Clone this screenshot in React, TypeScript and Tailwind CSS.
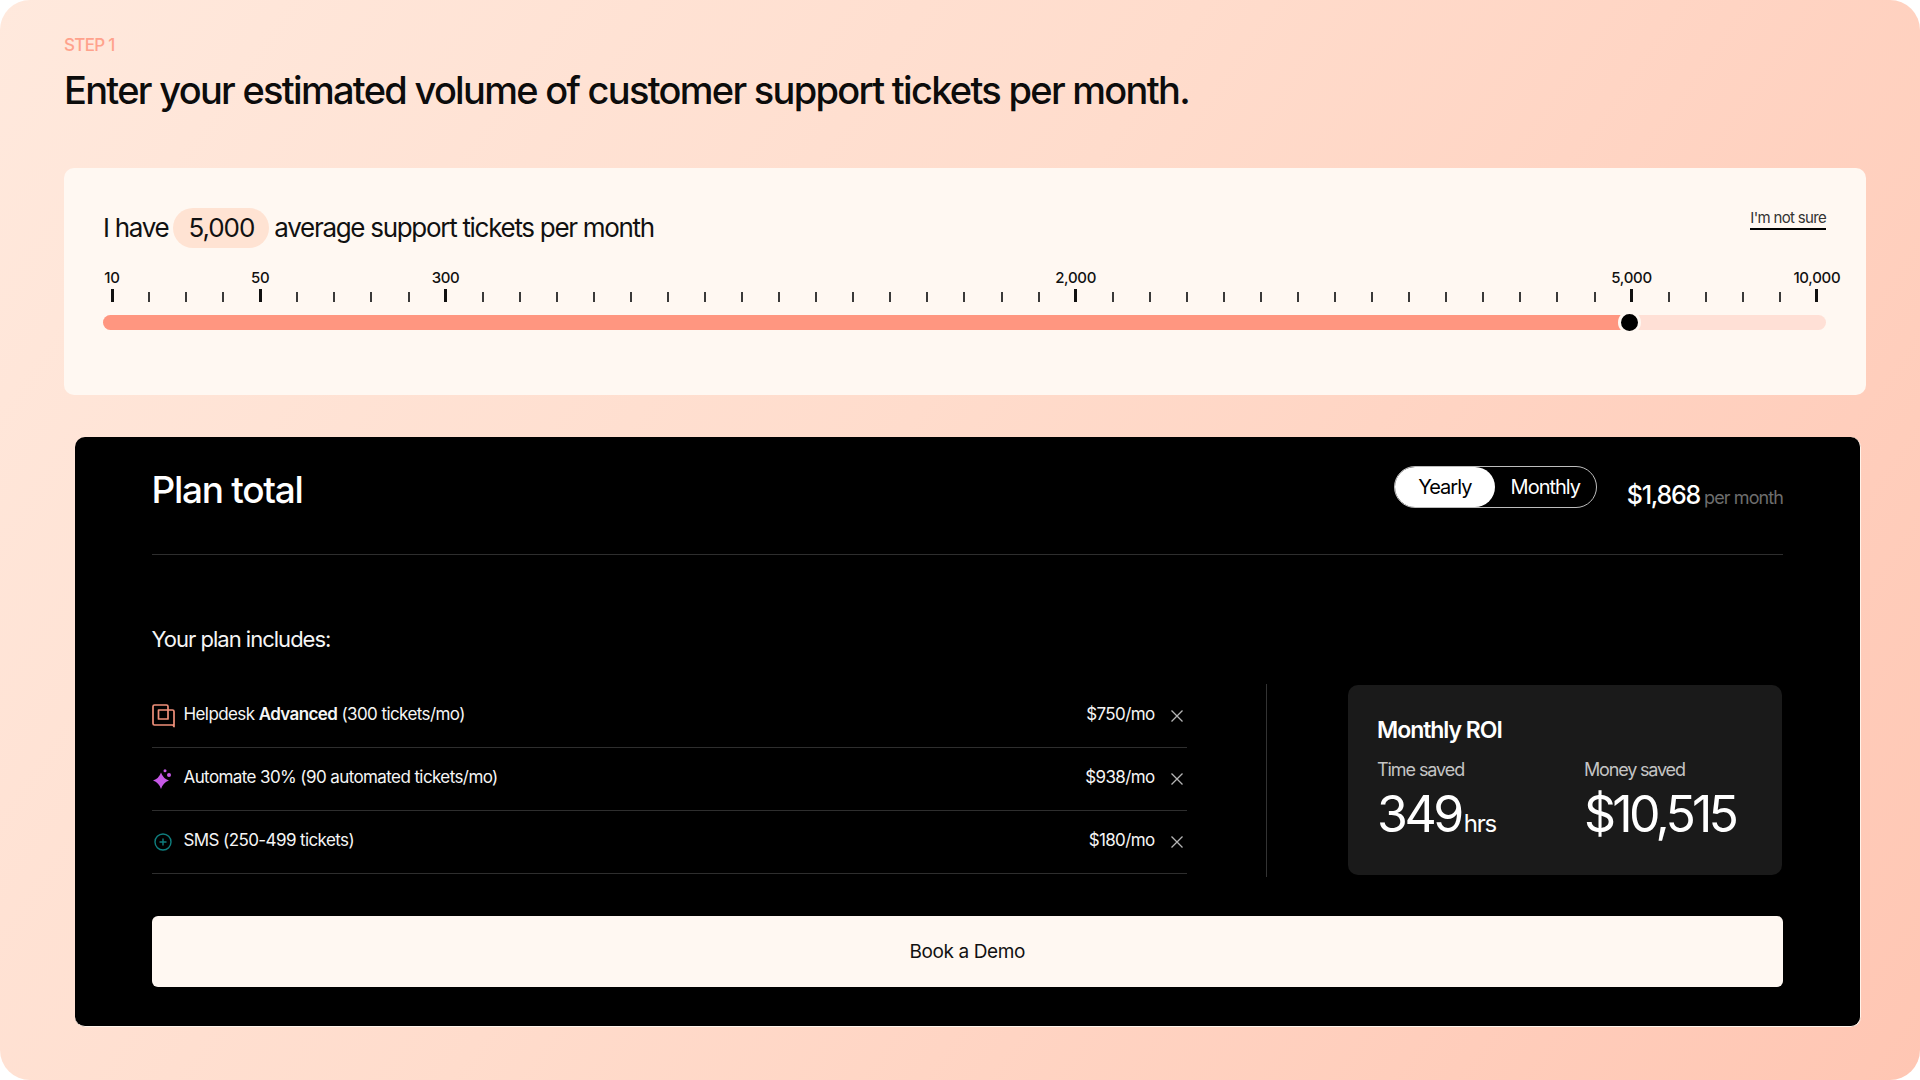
import React from "react";

const ticks = Array.from({ length: 47 }, (_, i) => i);
const labels: Record<number, string> = { 0: "10", 4: "50", 9: "300", 26: "2,000", 41: "5,000", 46: "10,000" };

function HelpdeskIcon() {
  return (
    <svg width="23" height="24" viewBox="0 0 23 24" fill="none" stroke="#f0907a" strokeWidth="1.7" strokeLinejoin="round">
      <path d="M16 15V2.500A1.500 1.500 0 0 0 14.500 1H2.500A1.500 1.500 0 0 0 1 2.500V19.500A1.500 1.500 0 0 0 2.500 21H21L22 22.500V7.500A1.500 1.500 0 0 0 20.500 6H6.500V15H16Z" />
    </svg>
  );
}

function SparkIcon() {
  return (
    <svg width="22" height="22" viewBox="0 0 22 22" fill="#c658e6">
      <path d="M9 3.500Q11 9.500 17 11.500Q11 13.500 9 20Q7 13.500 1 11.500Q7 9.500 9 3.500Z" />
      <circle cx="17" cy="6" r="2" />
      <circle cx="13" cy="1.800" r="1.500" />
    </svg>
  );
}

function PlusIcon() {
  return (
    <svg width="18" height="18" viewBox="0 0 18 18" fill="none" stroke="#0f7f7f" strokeWidth="1.400">
      <circle cx="9" cy="9" r="8" />
      <path d="M9 5.500v7M5.500 9h7" />
    </svg>
  );
}

function CloseIcon() {
  return (
    <svg width="12" height="12" viewBox="0 0 12 12" fill="none" stroke="#b5b5b5" strokeWidth="1.300">
      <path d="M.5.500l11 11M11.500.500l-11 11" />
    </svg>
  );
}

function Row({ icon, text, price }: { icon: React.ReactNode; text: React.ReactNode; price: string }) {
  return (
    <div className="flex h-[63px] items-center border-b border-[#2e2e2e]">
      <div className="flex w-[32px] shrink-0 items-center">{icon}</div>
      <div className="flex-1 pb-[2px] text-[17px] tracking-[-0.035em] text-[#f5f5f5]">{text}</div>
      <div className="pb-[2px] text-[17px] tracking-[-0.037em] text-[#f5f5f5]">{price}</div>
      <div className="ml-[16px] mr-[4px] flex w-[12px] justify-center">
        <CloseIcon />
      </div>
    </div>
  );
}

export default function App() {
  return (
    <div className="h-[1080px] w-[1920px] bg-white font-['Inter',sans-serif]">
      <div className="flex h-[1080px] w-[1920px] flex-col rounded-[30px] bg-[linear-gradient(125deg,#ffe9dd_0%,#ffdccc_45%,#ffc6b3_100%)] pl-[64px] pr-[54px]">
        <div className="mt-[36px] text-[17px] font-medium leading-[18px] tracking-[-0.04em] text-[#ffa28c]">STEP 1</div>
        <h1 className="mt-[13px] text-[38px] font-[450] leading-[46px] tracking-[-0.045em] text-[#0c0c0c]">
          Enter your estimated volume of customer support tickets per month.
        </h1>

        <div className="mt-[55px] h-[227px] rounded-[10px] bg-[#fff8f2] pl-[39px] pr-[40px] pt-[40px]">
          <div className="flex items-start justify-between">
            <div className="flex h-[40px] items-center text-[26px] tracking-[-0.05em] text-[#111111]">
              <span className="pb-[2px]">I have</span>
              <span className="mx-[5px] flex h-[40px] w-[96px] items-center justify-center rounded-full bg-[#ffe3d3] pb-[2px] tracking-[-0.04em]">5,000</span>
              <span className="pb-[2px]">average support tickets per month</span>
            </div>
            <div className="border-b-2 border-black text-[15px] leading-[20px] tracking-[-0.045em] text-[#333333]">I&apos;m not sure</div>
          </div>

          <div className="ml-[8px] mt-[20px] flex w-[1707px] items-start justify-between">
            {ticks.map((i) => (
              <div key={i} className="flex h-[34px] w-[2px] flex-col items-center justify-end">
                {labels[i] && (
                  <div className="mb-[2px] whitespace-nowrap text-[15px] font-medium leading-[18px] tracking-[-0.02em] text-[#111111]">{labels[i]}</div>
                )}
                <div className={labels[i] ? "h-[13px] w-[3px] bg-[#111111]" : "h-[10px] w-[2px] bg-[#3a3a3a]"} />
              </div>
            ))}
          </div>

          <div className="relative mt-[13px] h-[15px] rounded-full bg-[#ffe0d6]">
            <div className="h-[15px] w-[1526px] rounded-l-full bg-[#ff9680]" />
            <div className="absolute left-[1515px] top-[-4px] h-[23px] w-[23px] rounded-full border-[3px] border-[#fff8f2] bg-black" />
          </div>
        </div>

        <div className="ml-[11px] mr-[5px] mt-[42px] flex h-[590px] flex-col rounded-[10px] border-b border-r border-[#fff3ea] bg-black pl-[76.500px] pr-[77px]">
          <div className="flex h-[118px] items-start justify-between border-b border-[#2e2e2e]">
            <div className="mt-[30px] text-[37px] font-medium leading-[46px] tracking-[-0.035em] text-white">Plan total</div>
            <div className="mt-[29px] flex items-start">
              <div className="flex h-[42px] w-[203px] items-center rounded-full border border-[#bdbdbd] text-[20px] tracking-[-0.05em]">
                <div className="flex h-[40px] w-[100px] items-center justify-center rounded-full bg-white text-black">Yearly</div>
                <div className="flex flex-1 items-center justify-center text-white">Monthly</div>
              </div>
              <div className="ml-[30px] mt-[14px] flex items-baseline leading-[30px]">
                <span className="text-[25px] font-medium tracking-[-0.05em] text-white">$1,868</span>
                <span className="ml-[4px] text-[18px] tracking-[-0.05em] text-[#6d6d6d]">per month</span>
              </div>
            </div>
          </div>

          <div className="mt-[70px] text-[22px] leading-[28px] tracking-[-0.045em] text-[#f5f5f5]">Your plan includes:</div>

          <div className="mt-[31px] flex items-start">
            <div className="mr-[79.500px] mt-[1px] w-[1035px]">
              <Row icon={<HelpdeskIcon />} text={<>Helpdesk <b className="font-semibold">Advanced</b> (300 tickets/mo)</>} price="$750/mo" />
              <Row icon={<div className="pt-[1px]"><SparkIcon /></div>} text="Automate 30% (90 automated tickets/mo)" price="$938/mo" />
              <Row icon={<div className="ml-[2px]"><PlusIcon /></div>} text="SMS (250-499 tickets)" price="$180/mo" />
            </div>
            <div className="h-[193px] w-px bg-[#333333]" />
            <div className="ml-[81px] mt-[1px] flex h-[190px] w-[434px] flex-col rounded-[10px] bg-[#1a1a1a] pl-[29px] pt-[31px]">
              <div className="text-[23px] font-semibold leading-[28px] tracking-[-0.045em] text-white">Monthly ROI</div>
              <div className="mt-[14px] flex">
                <div className="w-[207px]">
                  <div className="text-[18px] leading-[24px] tracking-[-0.06em] text-[#c4c4c4]">Time saved</div>
                  <div className="mt-[4px] flex items-baseline leading-[56px] text-white">
                    <span className="text-[50px] tracking-[-0.07em]">349</span>
                    <span className="ml-[3px] text-[24px] tracking-[-0.05em]">hrs</span>
                  </div>
                </div>
                <div>
                  <div className="text-[18px] leading-[24px] tracking-[-0.065em] text-[#c4c4c4]">Money saved</div>
                  <div className="mt-[4px] text-[50px] leading-[56px] tracking-[-0.075em] text-white">$10,515</div>
                </div>
              </div>
            </div>
          </div>

          <div className="mt-[39px] flex h-[71px] items-center justify-center rounded-[6px] bg-[#fff8f2] pt-[2px] text-[19px] tracking-[-0.02em] text-[#111111]">
            Book a Demo
          </div>
        </div>
      </div>
    </div>
  );
}
